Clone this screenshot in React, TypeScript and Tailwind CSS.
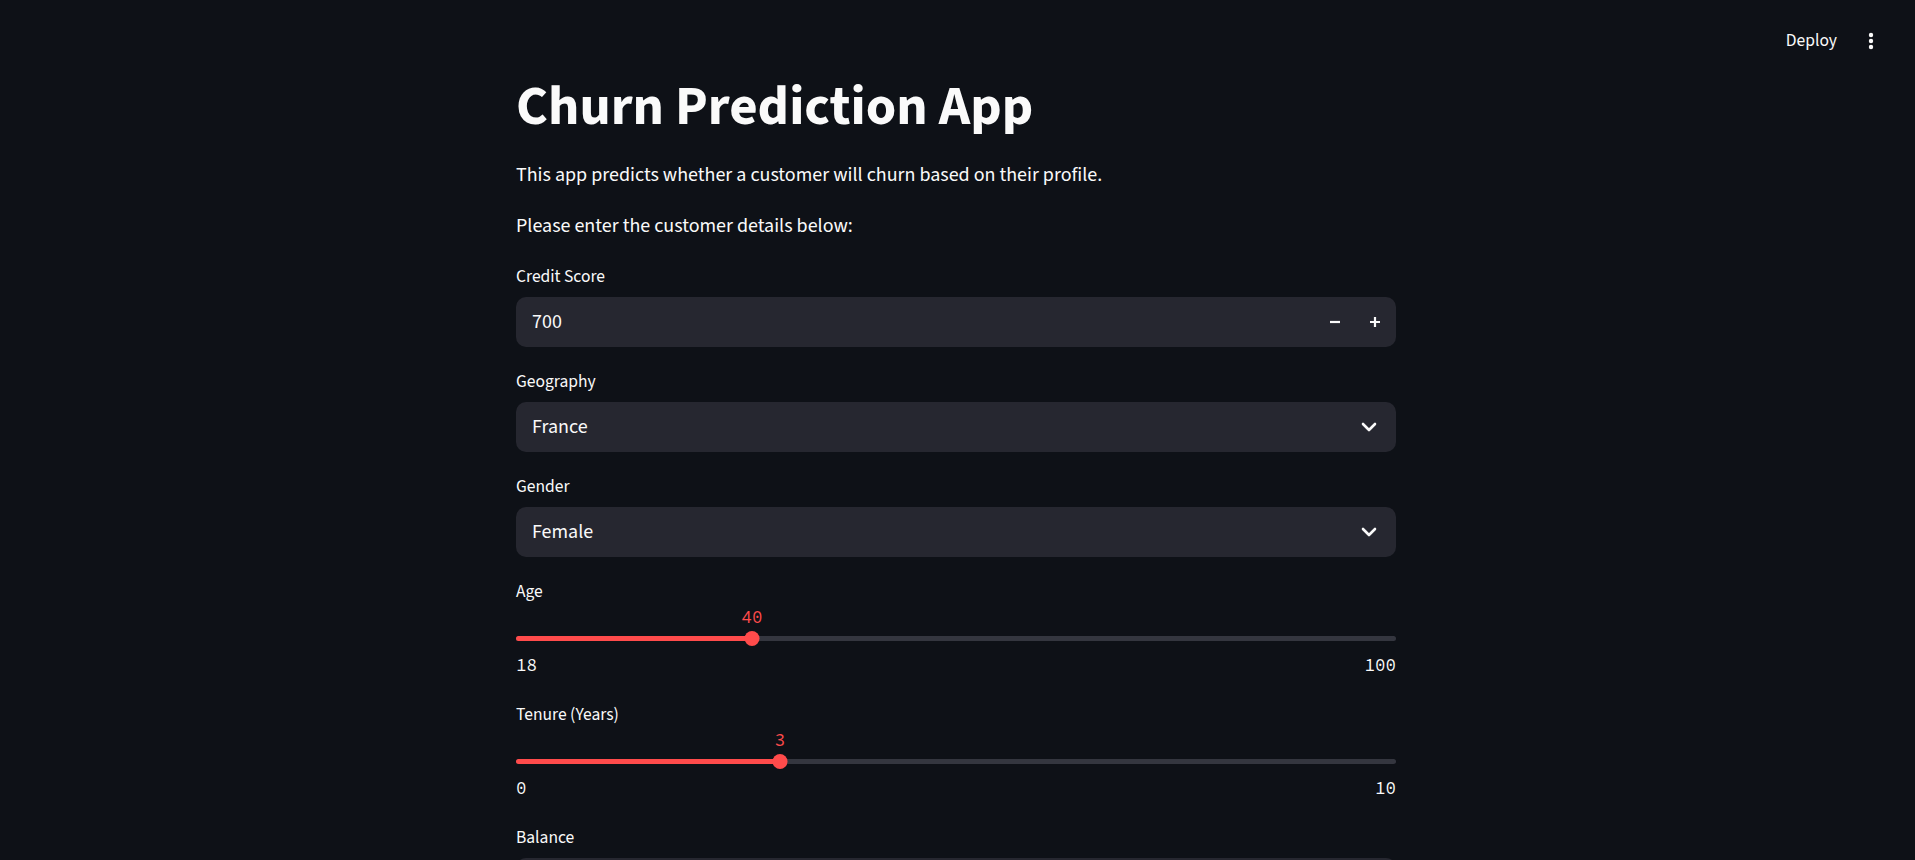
import React from "react";

function Label({ children }: { children: React.ReactNode }) {
  return (
    <div className="mb-[5px] flex h-[30px] items-center text-[17.5px] leading-[22px] text-[#fafafa]">
      {children}
    </div>
  );
}

function NumberInput({ label, value }: { label: string; value: string }) {
  return (
    <div className="flex flex-col">
      <Label>{label}</Label>
      <div className="flex h-[50px] items-center rounded-[10px] bg-[#262730]">
        <div className="flex-1 pl-[16px] text-[20px] leading-[24px] text-[#fafafa]">{value}</div>
        <div className="flex h-full w-[40px] items-center justify-center">
          <svg width="12" height="12" viewBox="0 0 12 12">
            <path d="M1 6h10" stroke="#fafafa" strokeWidth="2.2" />
          </svg>
        </div>
        <div className="mr-[1px] flex h-full w-[40px] items-center justify-center">
          <svg width="12" height="12" viewBox="0 0 12 12">
            <path d="M1 6h10M6 1v10" stroke="#fafafa" strokeWidth="2.2" />
          </svg>
        </div>
      </div>
    </div>
  );
}

function Select({ label, value }: { label: string; value: string }) {
  return (
    <div className="flex flex-col">
      <Label>{label}</Label>
      <div className="flex h-[50px] items-center rounded-[10px] bg-[#262730] pl-[16px] pr-[19px]">
        <div className="flex-1 text-[20px] leading-[24px] text-[#fafafa]">{value}</div>
        <svg width="16" height="12" viewBox="0 0 16 12">
          <path d="M2 3l6 6 6-6" fill="none" stroke="#fafafa" strokeWidth="2.6" strokeLinecap="round" strokeLinejoin="round" />
        </svg>
      </div>
    </div>
  );
}

function Slider({ label, value, min, max }: { label: string; value: number; min: number; max: number }) {
  const pct = ((value - min) / (max - min)) * 100;
  return (
    <div className="flex flex-col">
      <div className="flex h-[30px] items-center text-[17.5px] leading-[22px] text-[#fafafa]">{label}</div>
      <div className="flex h-[73px] flex-col font-['Source_Code_Pro','DejaVu_Sans_Mono',monospace]">
        <div className="relative h-[20px]">
          <div
            className="absolute top-0 -translate-x-1/2 text-[17.5px] leading-[20px] text-[#ff4b4b]"
            style={{ left: `${pct}%` }}
          >
            {value}
          </div>
        </div>
        <div className="relative mt-[4px] flex h-[15px] items-center">
          <div className="h-[5px] w-full rounded-full bg-[#34363f]">
            <div className="h-full rounded-full bg-[#ff4b4b]" style={{ width: `${pct}%` }} />
          </div>
          <div
            className="absolute top-0 h-[15px] w-[15px] -translate-x-1/2 rounded-full bg-[#ff4b4b]"
            style={{ left: `${pct}%` }}
          />
        </div>
        <div className="mt-[8px] flex justify-between text-[17.5px] leading-[22px] text-[#fafafa]">
          <span>{min}</span>
          <span>{max}</span>
        </div>
      </div>
    </div>
  );
}

export default function App() {
  return (
    <div className="h-[860px] overflow-hidden bg-[#0e1117] font-['Source_Sans_3',Lato,sans-serif] text-[#fafafa]">
      <header className="flex h-[74px] items-start justify-end pr-[34px] pt-[30px]">
        <div className="flex items-center">
          <span className="text-[17.5px] leading-[22px]">Deploy</span>
          <div className="ml-[24px] flex h-[22px] w-[20px] items-center justify-center">
            <svg width="6" height="18" viewBox="0 0 6 18">
              <circle cx="3" cy="3" r="2.2" fill="#fafafa" />
              <circle cx="3" cy="9" r="2.2" fill="#fafafa" />
              <circle cx="3" cy="15" r="2.2" fill="#fafafa" />
            </svg>
          </div>
        </div>
      </header>
      <div className="flex justify-center pr-[3px]">
        <main className="flex w-[880px] flex-col">
          <h1 className="text-[55px] font-bold leading-[66px] text-[#fafafa]">Churn Prediction App</h1>
          <p className="mt-[19px] text-[20px] leading-[32px]">
            This app predicts whether a customer will churn based on their profile.
          </p>
          <p className="mt-[19px] text-[20px] leading-[32px]">Please enter the customer details below:</p>
          <div className="mt-[20px] flex flex-col gap-[20px]">
            <NumberInput label="Credit Score" value="700" />
            <Select label="Geography" value="France" />
            <Select label="Gender" value="Female" />
            <Slider label="Age" value={40} min={18} max={100} />
            <Slider label="Tenure (Years)" value={3} min={0} max={10} />
            <div className="flex flex-col">
              <Label>Balance</Label>
              <div className="h-[50px] rounded-[10px] bg-[#262730]" />
            </div>
          </div>
        </main>
      </div>
    </div>
  );
}
